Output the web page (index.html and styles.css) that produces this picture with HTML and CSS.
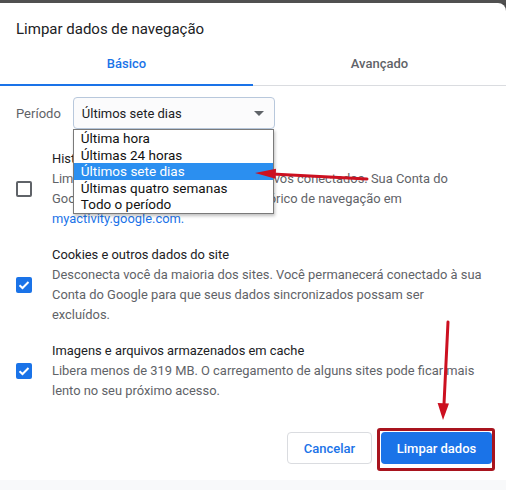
FILE: index.html
```html
<!DOCTYPE html>
<html lang="pt-BR">
<head>
<meta charset="utf-8">
<title>Limpar dados de navegação</title>
<link rel="stylesheet" href="styles.css">
</head>
<body>
<div class="topbar"></div>
<div class="dialog">
  <h1 class="title">Limpar dados de navegação</h1>
  <div class="tabs">
    <div class="tab active">Básico</div>
    <div class="tab">Avançado</div>
  </div>
  <div class="period">
    <span class="period-label">Período</span>
    <div class="select-wrap">
      <div class="select">
        <span>Últimos sete dias</span>
        <svg class="caret" width="10" height="5" viewBox="0 0 10 5"><path d="M0 0 L10 0 L5 5 Z" fill="#5f6368"/></svg>
      </div>
      <ul class="dropdown">
        <li>Última hora</li>
        <li>Últimas 24 horas</li>
        <li class="selected">Últimos sete dias</li>
        <li>Últimas quatro semanas</li>
        <li>Todo o período</li>
      </ul>
    </div>
  </div>
  <div class="items">
    <div class="item">
      <span class="cb"></span>
      <div class="item-text">
        <div class="item-title">Histórico de navegação</div>
        <div class="item-desc">Limpa o histórico de todos os dispositivos conectados. Sua Conta do Google pode ter outras formas de histórico de navegação em <a class="link" href="#">myactivity.google.com.</a></div>
      </div>
    </div>
    <div class="item">
      <span class="cb checked"><svg width="16" height="16" viewBox="0 0 16 16"><path d="M3.5 8.2 L6.5 11 L12.5 5" fill="none" stroke="#fff" stroke-width="2"/></svg></span>
      <div class="item-text">
        <div class="item-title">Cookies e outros dados do site</div>
        <div class="item-desc">Desconecta você da maioria dos sites. Você permanecerá conectado à sua Conta do Google para que seus dados sincronizados possam ser<br>excluídos.</div>
      </div>
    </div>
    <div class="item">
      <span class="cb checked"><svg width="16" height="16" viewBox="0 0 16 16"><path d="M3.5 8.2 L6.5 11 L12.5 5" fill="none" stroke="#fff" stroke-width="2"/></svg></span>
      <div class="item-text">
        <div class="item-title">Imagens e arquivos armazenados em cache</div>
        <div class="item-desc">Libera menos de 319 MB. O carregamento de alguns sites pode ficar mais lento no seu próximo acesso.</div>
      </div>
    </div>
  </div>
  <div class="actions">
    <button class="btn cancel">Cancelar</button>
    <button class="btn primary">Limpar dados</button>
  </div>
  <div class="footer"></div>
</div>
<svg class="annotations" width="506" height="490" viewBox="0 0 506 490">
  <path d="M367 179 L272 174" stroke="#cc1020" stroke-width="3" stroke-linecap="round" fill="none"/>
  <path d="M255 173 L276 168.8 L275.6 178.8 Z" fill="#cc1020"/>
  <path d="M448 322 L444 404" stroke="#cc1020" stroke-width="3" stroke-linecap="round" fill="none"/>
  <path d="M443 420 L437.6 403 L449 403.6 Z" fill="#cc1020"/>
  <rect x="378.5" y="429.5" width="115" height="40" rx="1.5" fill="none" stroke="#a8141e" stroke-width="3"/>
</svg>
</body>
</html>
```
FILE: styles.css
```css
* { box-sizing: border-box; }
html, body { margin: 0; padding: 0; }
body {
  width: 506px;
  height: 490px;
  overflow: hidden;
  background: #4a4a4a;
  font-family: Roboto, "Liberation Sans", Arial, sans-serif;
  color: #202124;
  position: relative;
}
.topbar { height: 3px; background: #505050; }
.dialog {
  height: 487px;
  background: #fff;
  border-top-right-radius: 8px;
  display: flex;
  flex-direction: column;
}
.title {
  margin: 0;
  padding: 16px 16px 4px;
  font-size: 15px;
  line-height: 20px;
  font-weight: 400;
  color: #202124;
}
.tabs {
  display: flex;
  height: 43px;
  box-shadow: inset 0 -1px 0 #dadce0;
}
.tab {
  flex: 1;
  text-align: center;
  font-size: 13px;
  font-weight: 500;
  line-height: 42px;
  color: #5f6368;
}
.tab.active {
  color: #1a73e8;
  border-bottom: 2px solid #1a73e8;
}
.period {
  display: flex;
  align-items: center;
  gap: 12px;
  padding: 11px 16px 0 16px;
  font-size: 13px;
  color: #5f6368;
}
.select-wrap { position: relative; }
.select {
  width: 202px;
  height: 32px;
  border: 1px solid #b8c8dc;
  border-radius: 4px;
  background: #fbfbfc;
  display: flex;
  align-items: center;
  justify-content: space-between;
  padding: 0 10px 0 8px;
  color: #202124;
  font-size: 13px;
}
.caret { display: block; }
.dropdown {
  position: absolute;
  top: 32px;
  left: 0;
  width: 201px;
  margin: 0;
  padding: 0;
  list-style: none;
  background: #fff;
  border: 1px solid #7a7a7a;
  box-shadow: 1px 2px 3px rgba(0,0,0,0.25);
  z-index: 2;
}
.dropdown li {
  height: 16.6px;
  line-height: 16.6px;
  padding-left: 7px;
  font-size: 13.5px;
  color: #111;
}
.dropdown li.selected {
  background: #2b8ff0;
  color: #fff;
}
.items { margin-top: 12px; }
.item {
  display: flex;
  align-items: center;
  padding: 8px 18px 8px 16px;
}
.cb {
  flex: none;
  width: 16px;
  height: 16px;
  border: 2px solid #5f6368;
  border-radius: 2px;
  margin-right: 20px;
}
.cb.checked {
  border: none;
  background: #1a73e8;
}
.cb svg { display: block; }
.item-text { flex: 1; font-size: 12.9px; line-height: 20px; }
.item-title { color: #202124; }
.item-desc { color: #5f6368; }
.link { color: #1a73e8; text-decoration: none; }
.actions {
  display: flex;
  justify-content: flex-end;
  gap: 9px;
  padding: 23px 14px 16px;
}
.btn {
  height: 32px;
  border-radius: 4px;
  font-family: inherit;
  font-size: 13px;
  font-weight: 500;
  padding: 0;
}
.cancel {
  width: 85px;
  background: #fff;
  color: #1a73e8;
  border: 1px solid #dadce0;
}
.primary {
  width: 111px;
  background: #1a73e8;
  color: #fff;
  border: none;
}
.footer { flex: 1; background: #f8f9fa; }
.annotations {
  position: absolute;
  top: 0;
  left: 0;
  pointer-events: none;
  z-index: 5;
}
```
